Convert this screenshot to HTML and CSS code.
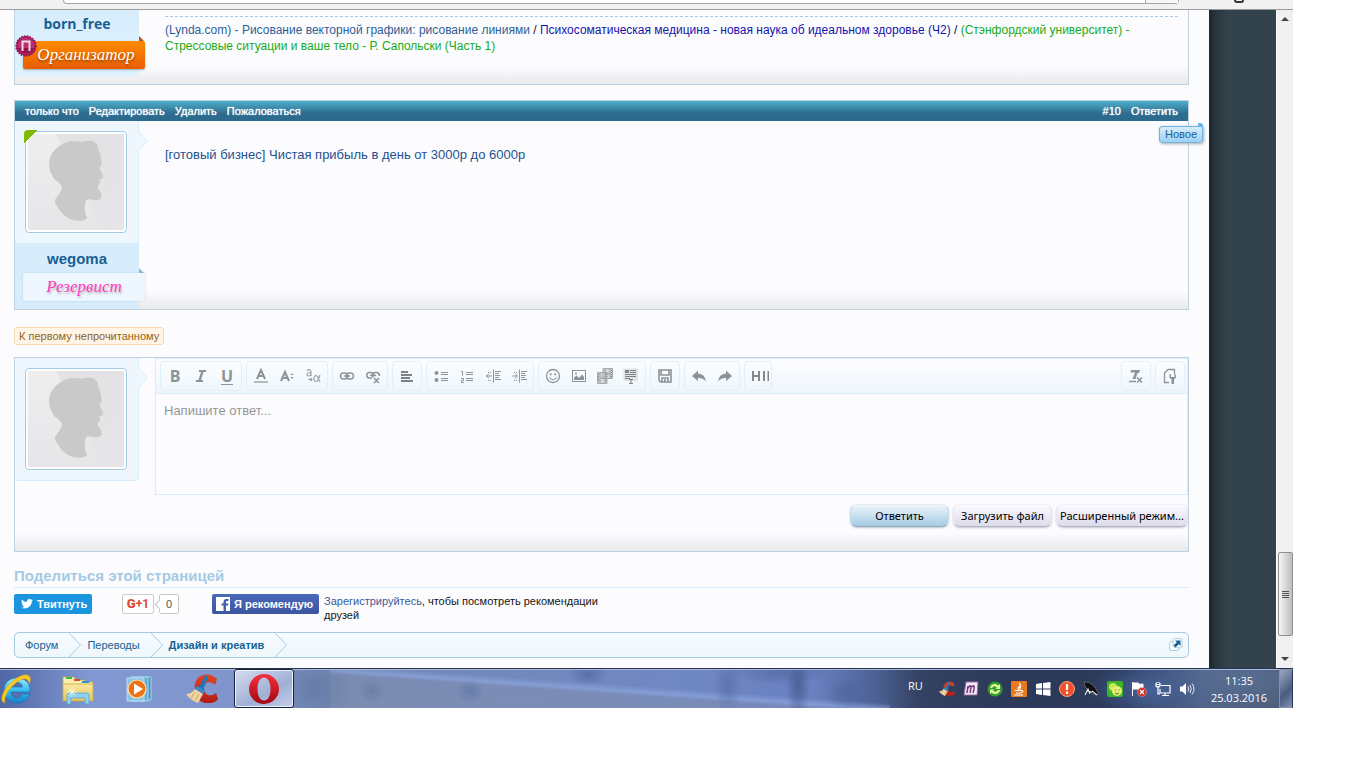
FILE: index.html
```html
<!DOCTYPE html>
<html lang="ru">
<head>
<meta charset="utf-8">
<title>Дизайн и креатив</title>
<link rel="stylesheet" href="styles.css">
</head>
<body>
<svg class="defs" aria-hidden="true">
  <defs>
    <linearGradient id="avatarBg" x1="0" y1="0" x2="1" y2="1"><stop offset="0" stop-color="#e4e4e5"/><stop offset=".3" stop-color="#e2e2e4"/><stop offset="1" stop-color="#e6e6e9"/></linearGradient>
    <linearGradient id="avatarShine" x1="0" y1="0" x2="0" y2="1"><stop offset="0" stop-color="#eeeeef"/><stop offset="1" stop-color="#e6e6e9"/></linearGradient>
    <symbol id="avatar" viewBox="84 63 288 288">
      <rect x="84" y="63" width="288" height="288" fill="url(#avatarBg)"/>
      <path d="M84 63H168L310 351H84z" fill="url(#avatarShine)"/>
      <path d="M150 175C147 160 146 145 150 135C158 110 185 90 210 85C225 82 235 87 245 86C262 83 275 82 284 88C290 94 296 98 293 106C299 118 304 130 305 155C300 160 298 165 300 170C306 180 310 187 310 192C309 197 302 198 297 200C302 208 300 213 295 216L292 226C300 235 306 243 305 252C303 262 290 262 280 261C270 257 262 258 258 262C252 285 254 300 260 310C262 318 255 322 245 323C215 325 190 312 175 285C168 275 163 268 164 262C172 250 182 240 186 225C184 210 168 205 160 195C157 185 152 182 150 175Z" fill="#c9c9c9"/>
    </symbol>
    <symbol id="chevron" viewBox="0 0 12 24"><path d="M0 0L11.5 12L0 24" fill="none" stroke="#a5cae4"/></symbol>
    <symbol id="pointer" viewBox="0 0 10 20"><path d="M0 0L9.500 10L0 20" fill="#eff7ff" stroke="#d7edfc"/></symbol>
    <linearGradient id="flame" x1="0" y1="0" x2="0" y2="1"><stop offset="0" stop-color="#e0442c"/><stop offset="1" stop-color="#b01c14"/></linearGradient>
    <symbol id="cclean" viewBox="0 0 32 32">
      <path d="M31 6C25-1 11 0 9 11C7 24 15 31 23 30C28 30 31 28 32 26L30 20C25 24 19 23 18 16C17 9 25 7 29 12z" fill="url(#flame)"/>
      <path d="M19 2L22 4L17 17L13 15z" fill="#1e78b4"/>
      <path d="M11 13L19 18L17 21L9 16z" fill="#2f8fd0"/>
      <path d="M9 16L17 21L12 30C8 29 3 25 0 21C4 21 7 19 9 16z" fill="#f0d4a2"/>
      <path d="M9 19L5 25M13 21L9 28" stroke="#c9a068" fill="none"/>
    </symbol>
  </defs>
</svg>

<div class="screen">
  <div class="browser-bar"><div class="address"><span class="address-end"></span></div><span class="ext"></span></div>

  <div class="viewport">
    <main class="page">
      <article class="post post-cut">
        <aside class="user">
          <a class="username username-alt" href="#">born_free</a>
          <div class="rank rank-orange">Организатор
            <svg class="medal" viewBox="0 0 22 22"><circle cx="11" cy="11" r="10" fill="#a3185c" stroke="#8d1050" stroke-width="1.500" stroke-dasharray="1.500 1.300"/><circle cx="11" cy="11" r="8.500" fill="#b8306f"/><path d="M3 13A8.500 8.500 0 0 0 19 13z" fill="#96124f"/><path d="M7.500 16V6.500H14.500V16" fill="none" stroke="#f3d9e6" stroke-width="2"/></svg>
          </div>
        </aside>
        <div class="signature"><a class="sig-blue" href="#">(Lynda.com) - Рисование векторной графики: рисование линиями</a> / <a class="sig-navy" href="#">Психосоматическая медицина - новая наука об идеальном здоровье (Ч2)</a> / <a class="sig-green" href="#">(Стэнфордский университет) - Стрессовые ситуации и ваше тело - Р. Сапольски (Часть 1)</a></div>
      </article>

      <article class="post">
        <header class="post-head">
          <a href="#">только что</a><a href="#">Редактировать</a><a href="#">Удалить</a><a href="#">Пожаловаться</a>
          <span class="spacer"></span>
          <a href="#">#10</a><a href="#">Ответить</a>
        </header>
        <div class="post-body">
          <aside class="user">
            <div class="avatar-box">
              <svg class="avatar"><use href="#avatar"/></svg>
              <span class="online"></span>
              <svg class="pointer"><use href="#pointer"/></svg>
            </div>
            <a class="username" href="#">wegoma</a>
            <div class="rank rank-light">Резервист</div>
          </aside>
          <p class="message">[готовый бизнес] Чистая прибыль в день от 3000р до 6000р</p>
          <span class="new-tag">Новое</span>
        </div>
      </article>

      <a class="first-unread" href="#">К первому непрочитанному</a>

      <form class="reply">
        <div class="avatar-box reply-avatar">
          <svg class="avatar"><use href="#avatar"/></svg>
          <svg class="pointer"><use href="#pointer"/></svg>
        </div>
        <div class="reply-main">
          <div class="editor">
            <div class="toolbar">
              <div class="group">
                <button type="button" class="glyph" aria-label="Жирный">B</button>
                <button type="button" aria-label="Курсив"><svg viewBox="0 0 16 16"><path d="M6 2H13V4H10.500L8 12H10V14H3V12H5.500L8 4H6z" fill="#8d9396"/></svg></button>
                <button type="button" class="glyph under" aria-label="Подчёркнутый">U</button>
              </div>
              <div class="group">
                <button type="button" aria-label="Цвет"><svg viewBox="0 0 16 16"><path d="M4 11L8 2L12 11M5.500 8H10.500" fill="none" stroke="#8d9396" stroke-width="2"/><path d="M1 13H15V15H1z" fill="#b4b9bb"/></svg></button>
                <button type="button" aria-label="Размер"><svg viewBox="0 0 16 16"><path d="M2 13L6 4L10 13M3.500 10H8.500" fill="none" stroke="#8d9396" stroke-width="2"/><path d="M11.500 7L13 5L14.500 7zM11.500 9L13 11L14.500 9z" fill="#8d9396"/></svg></button>
                <button type="button" aria-label="Шрифт"><svg viewBox="0 0 16 16" fill="none" stroke="#999fa2" stroke-width="1.200"><path d="M2 3C3 1 6 1 6 4V8M6 4.500C3 4.500 2 5 2 6.500C2 8.500 5 8.500 6 6.500M3 11.500H7M5.500 10L7 11.500L5.500 13M15 7L13 12C11 15 8.500 13 9 10C9.500 7 12 6 13.500 11L15 14"/></svg></button>
              </div>
              <div class="group">
                <button type="button" aria-label="Ссылка"><svg viewBox="0 0 16 16" fill="none" stroke="#8d9396" stroke-width="1.500"><rect x="1.500" y="5" width="7" height="6" rx="3"/><rect x="7.500" y="5" width="7" height="6" rx="3"/><path d="M5 8H11"/></svg></button>
                <button type="button" aria-label="Убрать ссылку"><svg viewBox="0 0 16 16" fill="none" stroke="#8d9396" stroke-width="1.500"><path d="M7 10H4.500A2.500 2.500 0 0 1 4.500 4.500H6.500Q9 5 9 7.500M8 9.500Q6 4.500 10 4.500H12Q14.500 5 14.500 8M5 7.500H11M9 10L14 15M14 10L9 15"/></svg></button>
              </div>
              <div class="group">
                <button type="button" aria-label="Выравнивание"><svg viewBox="0 0 16 16"><path d="M2 3H9V5H2zM2 6H13V8H2zM2 9H11V11H2zM2 12H14V14H2z" fill="#7d8386"/></svg></button>
              </div>
              <div class="group">
                <button type="button" aria-label="Список"><svg viewBox="0 0 16 16"><circle cx="3.500" cy="5" r="2" fill="#8d9396"/><circle cx="3.500" cy="12" r="2" fill="#8d9396"/><path d="M8 4.500H15M8 6.500H15M8 10.500H15M8 12.500H15" stroke="#8d9396"/></svg></button>
                <button type="button" aria-label="Нумерованный список"><svg viewBox="0 0 16 16" fill="none" stroke="#8d9396"><path d="M2 3.500H3.500V7.500M2 10.500H4.500V12.500H2.500V14.500H5M7 4.500H14M7 6.500H14M7 10.500H14M7 12.500H14"/></svg></button>
                <button type="button" aria-label="Меньше отступ"><svg viewBox="0 0 16 16" fill="none" stroke="#8d9396"><path d="M8.500 1.500V14.500M10 3.500H16M10 5.500H14M10 7.500H15M10 9.500H14M10 11.500H16M1 8H7M4 5.500L1.500 8L4 10.500"/><path d="M3 4.500H7M3 12.500H7" stroke-dasharray="1 1"/></svg></button>
                <button type="button" aria-label="Больше отступ"><svg viewBox="0 0 16 16" fill="none" stroke="#8d9396"><path d="M8.500 1.500V14.500M10 3.500H16M10 5.500H14M10 7.500H15M10 9.500H14M10 11.500H16M1 8H6M4 5.500L6.500 8L4 10.500"/><path d="M3 4.500H7M3 12.500H7" stroke-dasharray="1 1"/></svg></button>
              </div>
              <div class="group">
                <button type="button" aria-label="Смайлы"><svg viewBox="0 0 16 16"><circle cx="8" cy="8" r="6.500" fill="none" stroke="#8d9396" stroke-width="1.300"/><circle cx="5.700" cy="6.300" r="1.100" fill="#8d9396"/><circle cx="10.300" cy="6.300" r="1.100" fill="#8d9396"/><path d="M4.500 9.500Q8 14 11.500 9.500" fill="none" stroke="#8d9396" stroke-width="1.200"/></svg></button>
                <button type="button" aria-label="Изображение"><svg viewBox="0 0 16 16"><rect x="1.500" y="2.500" width="13" height="11" fill="none" stroke="#8d9396"/><path d="M3 12V9.500L5.500 7.500L8 10L11 6.500L13 9V12z" fill="#8d9396"/><circle cx="5" cy="5.500" r="1" fill="#8d9396"/></svg></button>
                <button type="button" aria-label="Видео"><svg viewBox="0 0 16 16"><path d="M6 .5H15.500V10.500H6zM.5 4.500H10V15.500H.5z" fill="#d3d8da" stroke="#a4a9ab"/><path d="M3 4.500V15M8 4.500V15M13 .5V10.500M8 1V4M3 10H8M8 5.500H13" fill="none" stroke="#9a9fa1"/><path d="M1.500 6V14M9 6V14M14.500 2V9" stroke="#777d80" stroke-dasharray="1 1"/></svg></button>
                <button type="button" aria-label="Вставка"><svg viewBox="0 0 16 16"><path d="M.5.500H15V13H.5z" fill="#dfe3e5"/><path d="M2 2H6V5H2z" fill="#7d8386"/><path d="M7 2.500H13M7 4.500H13M2 6.500H13M2 8.500H13M2 10.500H7M6 11.500H10M8 11.500V15.500M6 15.500H10" stroke="#7d8386" fill="none"/></svg></button>
              </div>
              <div class="group">
                <button type="button" aria-label="Черновик"><svg viewBox="0 0 16 16" fill="none" stroke="#8d9396" stroke-width="1.600"><path d="M2 2H14V14H3.500L2 12.500zM4 2V7H12V2M5 14V10H11V14M8 11V14"/></svg></button>
              </div>
              <div class="group">
                <button type="button" aria-label="Отменить"><svg viewBox="0 0 16 16"><path d="M1 8L7 2.500V5.500Q14 6 15 13.500Q12 9.500 7 10V13z" fill="#8d9396"/></svg></button>
                <button type="button" aria-label="Вернуть"><svg viewBox="0 0 16 16"><path d="M15 8L9 2.500V5.500Q2 6 1 13.500Q4 9.500 9 10V13z" fill="#8d9396"/></svg></button>
              </div>
              <div class="group narrow">
                <button type="button" aria-label="HIDE"><svg viewBox="0 0 18 16"><path d="M2 3V13M8 3V13M2 8H8M13 3V13M17.500 3V13" stroke="#85898b" stroke-width="2" fill="none"/></svg></button>
              </div>
              <span class="spacer"></span>
              <div class="group">
                <button type="button" aria-label="Убрать форматирование"><svg viewBox="0 0 16 16"><path d="M3 2H12L11 5H9.500L7.500 11H4.500L7 4.500H2.500z" fill="#8d9396"/><path d="M1 13.500H8M9 9.500L14 14.500M14 9.500L9 14.500" stroke="#8d9396" stroke-width="1.500"/></svg></button>
              </div>
              <div class="group">
                <button type="button" aria-label="BB-код"><svg viewBox="0 0 16 16"><path d="M7 14.500H2.500V5L6 1.500H12.500V6" fill="none" stroke="#8d9396" stroke-width="1.300"/><path d="M7.500 6.500V9.500L9.500 11.500V16H12V11.500L14 9.500V6.500L12.500 6V9H9V6z" fill="#8d9396"/></svg></button>
              </div>
            </div>
            <textarea aria-label="Ответ" placeholder="Напишите ответ..."></textarea>
          </div>
          <div class="actions">
            <button type="submit" class="btn primary">Ответить</button>
            <button type="button" class="btn">Загрузить файл</button>
            <button type="button" class="btn wide">Расширенный режим...</button>
          </div>
        </div>
      </form>

      <h2 class="share-title">Поделиться этой страницей</h2>
      <div class="share">
        <button type="button" class="tweet"><svg viewBox="0 0 24 20"><path d="M24 2.500Q23 4 21.500 5C22 14 13 22 0 17.500Q4 17.800 7 15.300Q3.500 15 2.500 12H4.500Q.8 10.500.8 7L3 7.500Q-.3 4.500 1.700 1Q6 6 11.800 6.200Q11 .8 16 0Q18.500-.2 20 1.500L23 .4Q22.500 2 21 3z" fill="#fff"/></svg>Твитнуть</button>
        <div class="gplus"><button type="button"><b>G</b>+1</button><span class="count">0</span></div>
        <button type="button" class="fb"><svg viewBox="0 0 14 14"><path d="M0 0H14V14H0z" fill="#fff"/><path d="M7.500 14V8.500H5.500V6.500H7.500V5Q7.500 2 10.500 2H12.500V4H11Q10 4 10 5V6.500H12.500L12 8.500H10V14z" fill="#4160ad"/></svg>Я рекомендую</button>
        <p class="fb-text"><a href="#">Зарегистрируйтесь</a>, чтобы посмотреть рекомендации друзей</p>
      </div>

      <nav class="crumbs">
        <a href="#">Форум</a><svg><use href="#chevron"/></svg>
        <a href="#">Переводы</a><svg><use href="#chevron"/></svg>
        <a class="current" href="#">Дизайн и креатив</a><svg><use href="#chevron"/></svg>
        <span class="spacer"></span>
        <a class="jump" href="#" aria-label="Открыть навигацию"><svg viewBox="0 0 14 14"><rect x=".7" y="3.500" width="9" height="9" rx="1.500" fill="#fff" stroke="#a5cae4"/><rect x="4" y=".7" width="9" height="9" rx="1.500" fill="#fff" stroke="#a5cae4"/><path d="M6 2.500H11.500V8L9.700 6.200L6.500 9.500L4.500 7.500L7.800 4.300z" fill="#176093"/></svg></a>
      </nav>
    </main>
    <div class="side"></div>
    <div class="scrollbar">
      <svg viewBox="0 0 8 4"><path d="M0 4L4 0L8 4z" fill="#444"/></svg>
      <div class="thumb"><i></i><i></i><i></i><i></i></div>
      <svg viewBox="0 0 8 4"><path d="M0 0L4 4L8 0z" fill="#444"/></svg>
    </div>
  </div>

  <footer class="taskbar">
    <button type="button" class="launch first" aria-label="Internet Explorer"><svg viewBox="0 0 32 32"><defs><linearGradient id="ie" x1="0" y1="0" x2="0" y2="1"><stop offset="0" stop-color="#9be8fc"/><stop offset=".5" stop-color="#35bdf0"/><stop offset="1" stop-color="#157fc8"/></linearGradient></defs><path d="M17 5C8 5 4 11 4 17C4 24 9 30 17 30C24 30 28 26 30 21H22C21 24 19 25 17 25C13 25 11 22 11 19H30C31 10 25 5 17 5zM11.500 14C12 11 14 9.500 17 9.500C20 9.500 22 11 22.500 14z" fill="url(#ie)" stroke="#1673b4" stroke-width=".7"/><path d="M5 30C-2 29 3 15 14 7C20 2 28 0 30 4C31 6 30 9 29 11C29 7 26 4 19 8C10 13 3 24 5 30z" fill="#f7c927" stroke="#d49a13" stroke-width=".5"/></svg></button>
    <button type="button" class="launch" aria-label="Проводник"><svg viewBox="0 0 32 32"><defs><linearGradient id="fold" x1="0" y1="0" x2="0" y2="1"><stop offset="0" stop-color="#fff5bd"/><stop offset="1" stop-color="#e7c75c"/></linearGradient></defs><path d="M1 27V4H12L14 7H22L24 9H31V28H1z" fill="url(#fold)" stroke="#caa64a" stroke-width=".8"/><path d="M4 4H10V6H4z" fill="#3eb449"/><path d="M12 6H18V8H12z" fill="#d6533b"/><path d="M20 8H27V10H20z" fill="#2f8fd8"/><path d="M1 11H31" stroke="#d9b95a"/><path d="M5 31V22Q5 20 8 20H24Q27 20 27 22V31H23V25H9V31z" fill="#8fd0ee" stroke="#58a6cf" stroke-width=".8"/><path d="M10 14V24M5 19H15M6.500 15.500L13.500 22.500M13.500 15.500L6.500 22.500" stroke="#fff" stroke-width=".8"/></svg></button>
    <button type="button" class="launch" aria-label="Медиаплеер"><svg viewBox="0 0 32 32"><path d="M11 4H27V27H11z" fill="#4d93bd" stroke="#a4d6ee"/><path d="M7 4H24V28H7z" fill="#69acd2" stroke="#a9ddf2"/><path d="M3 5H20V28H3z" fill="#8ac3e1" stroke="#b7e3f4"/><circle cx="13" cy="16" r="9" fill="#ee7213" stroke="#ffe2b8" stroke-width="1.200"/><path d="M10 10.500L19 16L10 21.500z" fill="#fff"/></svg></button>
    <button type="button" class="launch" aria-label="CCleaner"><svg><use href="#cclean"/></svg></button>
    <button type="button" class="launch active" aria-label="Opera"><svg viewBox="0 0 32 32"><defs><linearGradient id="op" x1="0" y1="0" x2="0" y2="1"><stop offset="0" stop-color="#f5303c"/><stop offset="1" stop-color="#a30812"/></linearGradient></defs><path fill-rule="evenodd" d="M16 1A15 15 0 1 0 16 31A15 15 0 1 0 16 1zM16 4.500C20.500 4.500 22.500 10 22.500 16C22.500 22 20.500 27.500 16 27.500C11.500 27.500 9.500 22 9.500 16C9.500 10 11.500 4.500 16 4.500z" fill="url(#op)"/></svg></button>
    <span class="spacer"></span>
    <div class="tray">
      <span class="lang">RU</span>
      <svg><use href="#cclean"/></svg>
      <svg viewBox="0 0 16 16"><path d="M3 1H15L14 14H1z" fill="#f2eaf3" stroke="#9d6aa5"/><path d="M4 12L5 5M5 7Q8 3 8 6L7 12M9 6Q12 3 11 8L10 12" fill="none" stroke="#76367f" stroke-width="1.500"/></svg>
      <svg viewBox="0 0 16 16"><circle cx="8" cy="8" r="7.500" fill="#2f9e2c"/><path d="M3 7Q4 3 8 3Q10 3 11.500 4.500L13 3V8H8.500L10 6.500Q7 4 5 7zM13 9Q12 13 8 13Q6 13 4.500 11.500L3 13V8.500H7.500L6 10Q9 12 11 9z" fill="#e9f7a4"/></svg>
      <svg viewBox="0 0 16 16"><rect width="16" height="16" rx="1" fill="#e9791f"/><path d="M8 2Q11 4 8 6Q6 8 8 9M10 5Q8 7 9.500 8.500M4 9.500H11Q13 10 10 12H5M3 14H12" fill="none" stroke="#fff" stroke-width="1.200"/></svg>
      <svg viewBox="0 0 16 16"><path d="M1 3L7 2V7.500H1zM8 2L15.500 1V7.500H8zM1 8.500H7V14L1 13zM8 8.500H15.500V15L8 14z" fill="#fff"/></svg>
      <svg viewBox="0 0 16 16"><circle cx="8" cy="8" r="7.500" fill="#ee512b" stroke="#f9a27f"/><path d="M8 3V9M8 10.500V13" stroke="#fff" stroke-width="2.200"/></svg>
      <svg viewBox="0 0 16 16"><path d="M1 1Q10 0 15.500 13Q13 15 8 11.500Q2 8 1 1z" fill="#0d0d0f" stroke="#999" stroke-width=".5"/><path d="M2 14L5 8L7 13M4 10L9 11M9 10L14 14" stroke="#ddd" stroke-width="1.200" fill="none"/></svg>
      <svg viewBox="0 0 16 16"><rect width="16" height="16" rx="2" fill="#3bb62a"/><circle cx="6" cy="6" r="4" fill="#c4ea52"/><circle cx="10" cy="10" r="5" fill="#e8ed79"/><path d="M8 9H9M11.500 9H12.500M8 12Q10 14 12 12" stroke="#467a1b" fill="none"/></svg>
      <svg viewBox="0 0 16 16"><path d="M1.500 1V15M2 2H7Q8 4 12 3V9Q8 10 7 8H2z" fill="#fff" stroke="#fff"/><circle cx="11" cy="11" r="4.500" fill="#d42b1e" stroke="#f3b2aa" stroke-width=".5"/><path d="M9 9L13 13M13 9L9 13" stroke="#fff" stroke-width="1.300"/></svg>
      <svg viewBox="0 0 16 16"><path d="M6 4.500H15V12H5V8M10 12V14M7 14.500H14M1 2V5Q3 7 5 5V2M1 3.500H5M3 6V13H5M2 1V2M4 1V2" fill="none" stroke="#fff" stroke-width="1.200"/></svg>
      <svg viewBox="0 0 16 16"><path d="M1 5.500H3.500L7 2V14L3.500 10.500H1z" fill="#fff"/><path d="M9 5.500Q10.500 8 9 10.500M11 4Q13.500 8 11 12M13 2.500Q17 8 13 13.500" fill="none" stroke="#e6eaf2"/></svg>
      <div class="clock"><span>11:35</span><span>25.03.2016</span></div>
    </div>
    <button type="button" class="peek" aria-label="Свернуть все окна"></button>
  </footer>
</div>
</body>
</html>
```
FILE: styles.css
```css
* { box-sizing: border-box; }
body { margin: 0; background: #fff; font-family: "Liberation Sans", Arial, sans-serif; font-size: 12px; color: #141414; }
a { color: inherit; text-decoration: none; }
button { font: inherit; margin: 0; cursor: pointer; }
svg { display: block; }
.defs { position: absolute; width: 0; height: 0; }
.spacer { flex: 1; }
.screen { margin-right: 73px; overflow: hidden; }

.browser-bar { display: flex; height: 10px; background: #f1f1f1; border-bottom: 1px solid #9b9b9b; padding: 0 54px 0 63px; }
.address { flex: 1; height: 4px; background: #fff; border: 1px solid #a6a6a6; border-top: 0; border-radius: 0 0 4px 4px; display: flex; justify-content: flex-end; }
.address-end { width: 33px; border-left: 1px solid #a6a6a6; background: #f7f7f7; }
.ext { width: 10px; height: 3px; margin: 0 -5px 0 55px; border: 2px solid #333; border-top: 0; border-radius: 0 0 3px 3px; }

.viewport { display: flex; }
.page { flex: 1; min-width: 0; background: #fcfcff; padding: 0 20px 10px 14px; }
.side { width: 67px; background: linear-gradient(90deg, #1b272b, #293840 8px, #32434b 20px); }
.scrollbar { width: 17px; background: #f0f0f0; border-left: 1px solid #fff; display: flex; flex-direction: column; align-items: center; padding: 7px 0; }
.scrollbar svg { width: 8px; height: 4px; }
.thumb { width: 15px; height: 84px; margin: auto 0 21px; border: 1px solid #8f8f8f; border-radius: 2px; background: linear-gradient(90deg, #f5f5f5, #d9d9dc 50%, #bcbdc2); display: flex; flex-direction: column; align-items: center; justify-content: center; gap: 1px; }
.thumb i { width: 7px; height: 1px; background: #555; }

.post, .reply { border: 1px solid #c0d2e0; background: linear-gradient(#fcfcff, #e9e9ec) bottom / 100% 18px no-repeat; }
.post-cut { display: flex; border-top: 0; height: 75px; margin-bottom: 15px; }
.user { width: 124px; flex: none; background: #d7edfc; text-align: center; }
.post-cut .user { height: 66px; background: linear-gradient(#d7edfc, #dff1fe); }
.username { display: block; font-size: 15px; line-height: 20px; font-weight: bold; color: #176093; padding-top: 6px; }
.username-alt { font-family: "Open Sans", sans-serif; font-size: 14px; padding-top: 4px; }
.rank { position: relative; height: 28px; margin: 7px -6px 0 8px; border-radius: 2px; font: italic 17px/28px "Liberation Serif", serif; }
.rank::after { content: ""; position: absolute; right: 1px; top: -5px; border-left: 5px solid; border-top: 5px solid transparent; }
.rank-orange { padding-left: 4px; color: #fff; background: linear-gradient(#ff8a00, #e85d00); box-shadow: 0 1px 2px #9ab; text-shadow: 0 2px 2px #a44a00; }
.rank-orange::after { border-left-color: #c85112; }
.rank-light { color: #ff3cbc; background: #eff7fe; box-shadow: 0 0 2px #a9cfe3; text-shadow: 1px 2px 2px #bbb; margin-top: 4px; }
.rank-light::after { border-left-color: #8db6cc; }
.medal { position: absolute; left: -8px; top: -6px; width: 22px; height: 22px; }
.signature { flex: 1; margin: 6px 10px 0 26px; padding-top: 5px; border-top: 1px dashed #a5cae4; line-height: 16px; }
.sig-blue { color: #2f5e96; }
.sig-navy { color: #1414ac; }
.sig-green { color: #18ab18; }

.post-head { display: flex; gap: 10px; height: 20px; padding: 0 10px; font-size: 11px; line-height: 20px; color: #fff; text-shadow: 0 0 1px #fff; background: linear-gradient(#4fb0cb, #2e6d90 60%, #2b6a8c); }
.post-body { display: flex; position: relative; }
.post-body .user { min-height: 188px; }
.avatar-box { position: relative; padding: 10px; height: 122px; background: #eff7fe; border-radius: 0 0 4px 4px; border-right: 1px solid #d7edfc; }
.avatar { width: 102px; height: 102px; padding: 2px; background: #fff; border: 1px solid #a5cae4; border-radius: 4px; }
.online { position: absolute; left: 9px; top: 9px; width: 13px; height: 13px; border-top-left-radius: 4px; background: linear-gradient(135deg, #7fb900 50%, transparent 50%); }
.pointer { position: absolute; left: 123px; top: 10px; width: 10px; height: 20px; }
.message { margin: 26px 20px 20px 26px; font-size: 13px; line-height: 16px; color: #24518c; }
.new-tag { position: absolute; right: -15px; top: 5px; width: 44px; height: 17px; font-size: 11px; line-height: 15px; text-align: center; color: #176093; border: 1px solid #6cb2e4; border-radius: 3px 0 3px 3px; background: linear-gradient(#d7edfc, #9fd0f3); box-shadow: 1px 1px 3px #aaa; }
.new-tag::after { content: ""; position: absolute; right: -1px; top: -4px; width: 5px; height: 4px; background: #6cb2e4; border-top-right-radius: 3px; }
.first-unread { display: block; width: fit-content; margin: 17px 0 12px; padding: 0 4px; border: 1px solid #f9d9b0; border-radius: 3px; background: #fff4e5; color: #8f6424; font-size: 11px; line-height: 16px; }

.reply { display: flex; gap: 16px; min-height: 195px; }
.reply-avatar { width: 124px; height: 123px; flex: none; border-bottom: 1px solid #d7edfc; }
.reply-main { flex: 1; min-width: 0; }
.editor { border: 1px solid #d7edfc; }
.toolbar { display: flex; gap: 4px; padding: 2px 2px 2px 4px; background: linear-gradient(#fcfcff, #eef6fd); border-bottom: 1px solid #d7edfc; }
.group { display: flex; height: 30px; padding: 1px; border: 1px solid #e1f1fc; border-radius: 4px; background: linear-gradient(#fbfdff, #eff7fc); }
.group button { width: 26px; height: 26px; padding: 0 5px; border: 0; background: none; }
.group svg { width: 16px; height: 16px; }
.group.narrow { width: 28px; }
.group.narrow svg { width: 18px; }
.group .glyph { font: bold 16px/26px "Open Sans", sans-serif; color: #8d9396; padding: 0; }
.group .under { text-decoration: underline; text-underline-offset: 2px; }
.editor textarea { display: block; width: 100%; height: 100px; padding: 9px 8px; border: 0; outline: 0; resize: none; background: #fcfcff; font: 13px/16px "Liberation Sans", Arial, sans-serif; }
.editor textarea::placeholder { color: #969696; opacity: 1; }
.actions { display: flex; justify-content: flex-end; gap: 4px; padding-top: 9px; }
.btn { min-width: 99px; height: 23px; padding: 0 3px; border: 1px solid #e6e4ee; border-top-color: #f1f0f6; border-bottom-color: #b7b4c8; border-radius: 7px; background: linear-gradient(#fbfaff, #dddbea); box-shadow: 0 1px 2px #c4c4cc; font: 11px/20px "Noto Sans", sans-serif; color: #000; }
.btn.primary { background: linear-gradient(#edf5f9, #a5cae4); border-color: #e2eef5 #c5dae8 #94abc0; }
.btn.wide { min-width: 132px; }

.share-title { margin: 16px 0 6px; padding-bottom: 3px; border-bottom: 1px solid #d7edfc; font-size: 15px; line-height: 16px; color: #a5cae4; }
.share { display: flex; align-items: flex-start; height: 38px; font-size: 11px; }
.tweet, .fb { display: flex; align-items: center; height: 20px; padding: 0; border: 0; border-radius: 2px; color: #fff; font-weight: bold; white-space: nowrap; }
.tweet { width: 78px; gap: 4px; padding-left: 7px; background: #1b95e0; }
.tweet svg { width: 12px; height: 10px; }
.gplus { display: flex; gap: 5px; margin: 0 33px 0 30px; }
.gplus button { width: 32px; height: 20px; padding: 0; border: 1px solid #ccc; border-radius: 2px; background: #fff; color: #dc4a38; font: bold 12px/18px Roboto, sans-serif; }
.gplus b { font-size: 13px; }
.count { position: relative; width: 20px; height: 20px; border: 1px solid #c8c8c8; border-radius: 2px; background: #fff; text-align: center; line-height: 18px; color: #555; }
.count::before { content: ""; position: absolute; left: -4px; top: 6px; width: 6px; height: 6px; background: #fff; border: 1px solid #c8c8c8; border-width: 0 0 1px 1px; transform: rotate(45deg); }
.fb { width: 107px; gap: 4px; padding-left: 4px; background: linear-gradient(#4c69ba, #3b55a0); }
.fb svg { width: 14px; height: 14px; }
.fb-text { margin: 0 0 0 5px; max-width: 280px; line-height: 14px; }
.fb-text a { color: #3b5998; }

.crumbs { display: flex; align-items: center; height: 26px; border: 1px solid #a5cae4; border-radius: 5px; background: linear-gradient(#f6fbff, #eff7fb); overflow: hidden; font-size: 11px; color: #176093; }
.crumbs > a { padding: 0 11px 0 6px; }
.crumbs > a:first-child { padding-left: 10px; }
.crumbs > svg { width: 12px; height: 24px; }
.crumbs .current { font-weight: bold; }
.crumbs .jump { padding: 0 5px 0 0; }
.jump svg { width: 14px; height: 14px; }

.taskbar { display: flex; height: 40px; border-top: 1px solid #29344d; box-shadow: inset 0 1px #a9bbe0; background:
  radial-gradient(60px 30px at 1150px 20px, #466299, transparent),
  radial-gradient(90px 30px at 1240px 10px, #576d91, transparent),
  radial-gradient(20px 12px at 588px 5px, #4d649eaa, transparent),
  radial-gradient(12px 36px at 798px 16px, #46588ecc, transparent),
  radial-gradient(50px 12px at 780px 4px, #50669eaa, transparent),
  radial-gradient(14px 30px at 728px 16px, #566ca6aa, transparent),
  radial-gradient(22px 16px at 848px 24px, #4d639caa, transparent),
  radial-gradient(14px 12px at 470px 22px, #5a70a299, transparent),
  radial-gradient(14px 12px at 372px 22px, #61769f99, transparent),
  radial-gradient(40px 30px at 315px 20px, #60779f99, transparent),
  linear-gradient(4deg, #8792ae88, #8290b088 43%, #8fa8e0aa 48%, transparent 56%) 330px 0 / 560px 100% no-repeat,
  linear-gradient(90deg, #5067a6, #8199d3 7%, #7f95cc 17%, #7186b3 25%, #7289bd 40%, #6f87c2 52%, #6880c0 63%, #4b5f91 68%, #344263 71%, #2c3959 78%, #2d3a5a 87%, #52658b 93%, #4f5d78); }
.launch { width: 62px; height: 38px; margin-top: 1px; padding: 0 15px; border: 0; background: none; }
.launch svg { width: 32px; height: 32px; }
.launch.first { width: 47px; padding-left: 0; }
.launch.active { width: 60px; margin: 0 1px; height: 39px; padding: 0 13px; border: 1px solid #17223e; border-radius: 3px; background: linear-gradient(150deg, #d4dcf0, #a0afd4 60%, #c4cfe9); box-shadow: inset 0 0 0 1px #eef2fb; }
.tray { display: flex; align-items: center; gap: 8px; padding-right: 12px; }
.tray svg { width: 16px; height: 16px; }
.lang { color: #fff; font: 11px/14px "Open Sans", sans-serif; margin: 0 8px 6px 0; }
.clock { display: flex; flex-direction: column; align-items: center; margin-left: 8px; color: #fff; font: 11px/17px "Open Sans", sans-serif; }
.peek { width: 14px; padding: 0; border: 1px solid #8391ad; border-right-color: #2a3654; background: linear-gradient(135deg, #9aa8c4, #4a5b80 60%, #8291b2); }
```
